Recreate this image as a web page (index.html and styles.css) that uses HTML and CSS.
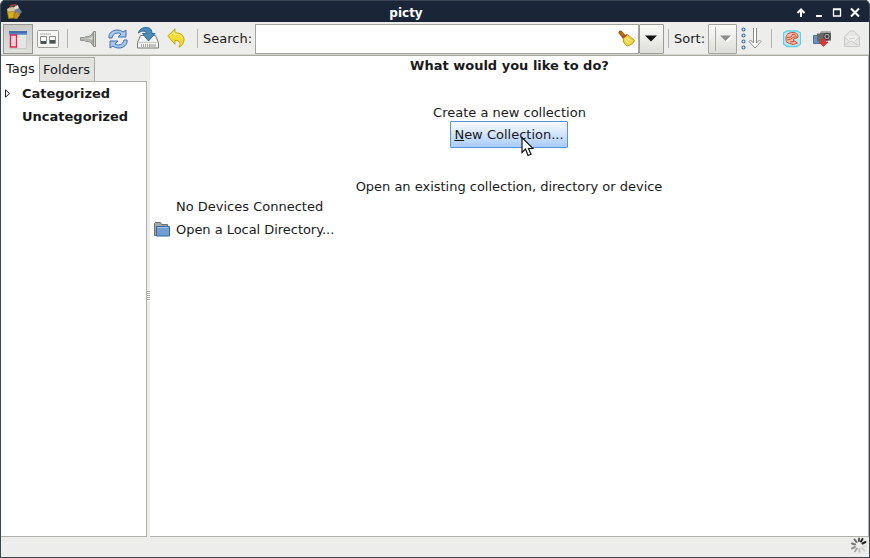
FILE: index.html
```
<!DOCTYPE html>
<html lang="en">
<head>
<meta charset="utf-8">
<title>picty</title>
<link rel="stylesheet" href="styles.css">
</head>
<body>
<div class="window">
  <header class="titlebar">
    <svg class="app-icon" width="16" height="16" viewBox="0 0 16 16"><path d="M4 1l6-1 4 5-5 4-6-2z" fill="#b53b35"/><path d="M1 5l5-3 4 4-3 5-5-1z" fill="#d6c7a0"/><path d="M8 3l4-2 1 4-4 3z" fill="#e1e5df"/><path d="M8 6l5-2 3 4-4 4z" fill="#6d7e98"/><path d="M7 9l5-1 2 3-3 4-5-1z" fill="#bb8d32"/><path d="M1.500 8l7-.5-1 6.500-5 .5z" fill="#d0b41b" stroke="#957820" stroke-width=".7"/><path d="M4 3l5-1" stroke="#413a3b" fill="none"/></svg>
    <h1 class="title">picty</h1>
    <div class="controls">
      <svg width="66" height="14" viewBox="0 0 66 14" fill="none" stroke="#fff" stroke-width="2"><path d="M6 11V5M2.500 7L6 3.500 9.500 7"/><path d="M21 10h6"/><path d="M38.500 3.500h7v6.500h-7zM38 3h8" stroke-width="1.300"/><path d="M56 2.500l8 8m0-8l-8 8"/></svg>
    </div>
  </header>

  <div class="toolbar">
    <div class="tool pressed"><svg width="18" height="18" viewBox="0 0 18 18"><path d="M.5.500h17v17H.500z" fill="#e6e7e3" stroke="#c6cac4"/><path d="M0 0h18v4H0z" fill="#6f9bd0"/><path d="M0 0h18v2.500H0z" fill="#436fae"/><path d="M1.500 4h6v12h-6z" fill="#fad0da" stroke="#dc2450" stroke-width="1.300"/></svg></div>
    <div class="tool browse"><svg width="22" height="18" viewBox="0 0 22 18"><rect x=".5" y=".5" width="21" height="17" rx="1" fill="#f7f7f5" stroke="#9b9e99"/><path d="M3 4h11" stroke="#d1d3cf" stroke-width="2"/><path d="M3.500 6.500h6v7h-6zM12.500 6.500h6v7h-6z" fill="#fff" stroke="#888c87"/><path d="M4 11h5v3H4zM13 10h5v3h-5z" fill="#4d5656"/></svg></div>
    <i class="sep"></i>
    <div class="tool horn"><svg width="17" height="18" viewBox="0 0 17 18"><path d="M.5 7.500h4l1-1H8c2 0 4-2 5-4v13c-1-2-3-4-5-4H5.500l-1-1h-4z" fill="#b4b7b1" stroke="#888b85" stroke-width=".8"/><path d="M6 8.500h3c2 0 3-2 3.500-3v4z" fill="#e2e3df"/><path d="M13.500 1.500h2v15h-2z" fill="#d3d6d0" stroke="#848880" stroke-width=".9"/></svg></div>
    <div class="tool refresh"><svg width="20" height="20" viewBox="0 0 20 20" fill="#a9c6ea" stroke="#3e70b3" stroke-linejoin="round"><path d="M1 9C0 4 5 1 9 1c3 0 5 1 6 2l3-2v7h-8l3-3C10 3 5 4 4 9z"/><path d="M19 11c1 5-4 8-8 8-3 0-5-1-6-2l-3 2v-7h8l-3 3c3 2 8 1 9-4z"/></svg></div>
    <div class="tool save"><svg width="22" height="22" viewBox="0 0 22 22"><path d="M3.500 8.500h15l3 7v5.500H.500v-5.500z" fill="#f3f3f1" stroke="#777a75"/><path d="M1 15.500h20" stroke="#c5c8c3"/><path d="M4 18.500h9" stroke="#aaa" stroke-width="3" stroke-dasharray="1 1"/><path d="M13 18.500h6" stroke="#c3c5c0" stroke-width="3"/><path d="M1.500 6C2 2 6 .500 9 .5c4 0 6 2 6 6h3l-6.500 7.500L5.500 6.500h4C9 4 5 3 1.500 6z" fill="#4c8bb5" stroke="#2e6e99"/></svg></div>
    <div class="tool undo"><svg width="18" height="20" viewBox="0 0 18 20"><path d="M8 .800v4c6 0 9 3 9 7 0 3-2 6-5 7.500 2-4 1-7-4-7v4L.800 8z" fill="#f5dc32" stroke="#c9a50b" stroke-linejoin="round"/><path d="M3 8l4-4v2c4 0 7 1 8 4" fill="none" stroke="#fff394"/></svg></div>
    <i class="sep sep-search"></i>
    <label class="search-label">Search:</label>
    <div class="entry"><svg width="17" height="17" viewBox="0 0 17 17"><path d="M2.500 2.500l3.500 4" stroke="#8f5902" stroke-width="4" stroke-linecap="round"/><path d="M2.500 2.500l3 3" stroke="#b8711b" stroke-width="2" stroke-linecap="round"/><path d="M5 8.500l4.500-4 7 6c-1 3-4 4.500-7 5.500C7 15 5 12 5 8.500z" fill="#efd74a" stroke="#b49512"/><path d="M4.500 8l4.500-3.500" stroke="#c23b22" stroke-width="1.500"/><path d="M7 9l3 4M9.500 8l3 3" stroke="#fff4a0"/></svg></div>
    <div class="drop"><svg width="12" height="7" viewBox="0 0 12 7"><path d="M0 .5h12L6 6.500z" fill="#111"/></svg></div>
    <i class="sep sep-sort"></i>
    <label class="sort-label">Sort:</label>
    <div class="combo"><i></i><svg width="12" height="7" viewBox="0 0 12 7"><path d="M1 1.500h12L7 7z" fill="#fff"/><path d="M0 .5h11L5.500 6z" fill="#8b8e88"/></svg></div>
    <div class="tool order"><svg width="21" height="23" viewBox="0 0 21 23"><g fill="#e9f1fb" stroke="#4470ad" stroke-width="1.200"><circle cx="2.500" cy="2.500" r="1.500"/><circle cx="2.500" cy="8.500" r="1.500"/><circle cx="2.500" cy="14.500" r="1.500"/><circle cx="2.500" cy="20.500" r="1.500"/></g><path d="M12.500 1v15l-3-3-1.500 1.500 6 6.500 6-6.500-1.500-1.500-3 3V1" fill="#fff" stroke="#888b86"/></svg></div>
    <i class="sep sep-end"></i>
    <div class="tool brain"><svg width="18" height="18" viewBox="0 0 18 18"><path d="M4 1h10l3.500 2v11L14 16.500H4L.5 14V3z" fill="#bceaf2" stroke="#5fd0e6" stroke-width="1.300"/><path d="M3 8c0-4 3-5.500 7-5.500 3.500 0 5 1.500 5 4.500-1 2-4 1-5 3l4.500 3-4 1.500-4-1-3-1.500C3 11 3 10 3 8z" fill="#f5bba8" stroke="#c8503a"/><path d="M4 7.500l4-.5 2-3 3 1.500M4 10l4-1 3-2 3 0M7 12l4-.5" fill="none" stroke="#c8503a"/></svg></div>
    <div class="tool camera"><svg width="19" height="18" viewBox="0 0 19 18"><path d="M.5 5.500h8v8h-8z" fill="#6b91c0" stroke="#4c73a6"/><path d="M4 3.500h3l1-2h10v9l-9 1H4z" fill="#666865"/><path d="M8 2h10" stroke="#b7b7b2" stroke-width="1.500"/><circle cx="14" cy="6.500" r="3.200" fill="#aaa" stroke="#333"/><circle cx="14" cy="6.500" r="1.500" fill="#333"/><path d="M8.500 9h4v3h2.500L10.500 16.500 6 12h2.500z" fill="#e03838" stroke="#c22929" stroke-width=".7"/></svg></div>
    <div class="tool mail"><svg width="16" height="17" viewBox="0 0 16 17"><path d="M.5 7L6 1h4l5.500 6v9.500H.500z" fill="#e6e7e4" stroke="#c9cbc6"/><path d="M3 6h10v5H3z" fill="#f1f1ef"/><path d="M1 15l6-4 7 4M1 8l4 3m10-3l-4 3" fill="none" stroke="#cbcdc8"/><path d="M5 9l6-1" stroke="#d0d2cd"/></svg></div>
  </div>

  <main class="main">
    <aside class="sidebar">
      <nav class="tabs"><div class="tab active">Tags</div><div class="tab folders">Folders</div></nav>
      <div class="tree">
        <div class="node"><svg width="6" height="9" viewBox="0 0 6 9"><path d="M.5.800v7.400l4-3.700z" fill="#fff" stroke="#222"/></svg>Categorized</div>
        <div class="node leaf">Uncategorized</div>
      </div>
    </aside>
    <div class="handle"><i></i></div>
    <section class="content">
      <h2>What would you like to do?</h2>
      <p class="create">Create a new collection</p>
      <div class="button-wrap">
        <button class="new"><u>N</u>ew Collection...</button>
        <svg class="cursor" width="13" height="21" viewBox="0 0 13 21"><path d="M1 1.500v15l3.500-3.500 2.500 6.500 3-1.300L7.500 12.500H12z" fill="#fff" stroke="#111" stroke-width="1.200"/></svg>
      </div>
      <p class="open">Open an existing collection, directory or device</p>
      <p class="devices">No Devices Connected</p>
      <p class="local"><svg width="16" height="15" viewBox="0 0 16 15"><path d="M.5 13V1.500l1-1h5l1 2h6v11H.500z" fill="#a5a8a2" stroke="#6d716b"/><path d="M2.500 4.500h13v9.500h-13z" fill="#729fcf" stroke="#3465a4"/><path d="M3.500 5.500h11" stroke="#a6c6e8"/></svg>Open a Local Directory...</p>
    </section>
  </main>
  <footer class="status">
    <svg width="16" height="16" viewBox="0 0 16 16" stroke-width="2" stroke-linecap="round"><g fill="none"><path d="M8 4V1.500" stroke="#555"/><path d="M10 4.500L11.500 2" stroke="#222"/><path d="M11.500 6.500L14.500 5" stroke="#222"/><path d="M12 9l3 .5" stroke="#ddd"/><path d="M11 11l2.500 2.500" stroke="#d1d1cf"/><path d="M8.500 12v3" stroke="#c2c2c0"/><path d="M6 11.500L4 14.500" stroke="#aaa"/><path d="M4 10L1 11.500" stroke="#999"/><path d="M4 7.500L1 6.500" stroke="#777"/><path d="M5.500 5L3.500 2.500" stroke="#666"/></g></svg>
  </footer>
</div>
</body>
</html>
```
FILE: styles.css
```
* { box-sizing: border-box; }
body { margin: 0; background: #fff; font: 13px/16px "DejaVu Sans", sans-serif; color: #1a1a1a; }
h1, h2, p { margin: 0; font-size: inherit; }
svg { display: block; flex: none; }
.window { width: 870px; height: 558px; border: 1px solid #3a4654; border-top: 0; border-radius: 5px 5px 0 0; background: #ededeb; display: flex; flex-direction: column; overflow: hidden; }
.titlebar { height: 22px; flex: none; background: #1a2637; border-top: 1px solid #3a4654; color: #fff; display: flex; align-items: center; padding: 0 6px 0 5px; }
.app-icon { margin-top: 1px; }
.title { flex: 1; text-align: center; font-size: 12px; padding: 3px 5px 0 0; }
.controls { width: 68px; padding-top: 2px; }
.toolbar { height: 34px; flex: none; display: flex; align-items: center; border-bottom: 1px solid #a9a9a2; padding: 2px 0 2px 2px; box-shadow: inset 0 -1px #d5d5d0; }
.tool { flex: none; display: flex; align-items: center; justify-content: center; }
.pressed { width: 30px; height: 30px; border: 1px solid #989892; background: linear-gradient(#c9c9c6, #e0e0dd); }
.pressed svg { margin-top: 2px; }
.browse { margin-left: 4px; padding-top: 1px; }
.sep { width: 1px; height: 19px; flex: none; background: #b5b5af; margin-left: 8px; }
.horn { margin-left: 12px; }
.refresh { margin-left: 11px; }
.save { margin-left: 9px; margin-top: -2px; }
.undo { margin-left: 8px; margin-top: -2px; }
.sep-search { margin-left: 12px; }
.search-label { margin-left: 5px; width: 52px; white-space: nowrap; }
.entry { width: 384px; height: 30px; flex: none; background: #fff; border: 1px solid #a5a5a0; display: flex; align-items: center; justify-content: flex-end; padding-right: 3px; }
.drop, .combo { height: 30px; border: 1px solid #9c9c96; border-radius: 1px; background: linear-gradient(#fafaf9, #deded9); display: flex; align-items: center; flex: none; }
.drop { width: 25px; justify-content: center; }
.drop svg { margin-left: -1px; }
.sep-sort { margin-left: 4px; }
.sort-label { margin-left: 5px; width: 34px; white-space: nowrap; }
.combo { width: 29px; border-color: #a5a59f; }
.combo i { width: 1px; height: 24px; background: #aaaaa3; margin: 0 4px 0 6px; }
.order { margin-left: 4px; }
.sep-end { margin-left: 9px; }
.brain { margin-left: 11px; }
.camera { margin-left: 12px; }
.mail { margin-left: 12px; }
.main { flex: 1; display: flex; min-height: 0; }
.sidebar { width: 146px; display: flex; flex-direction: column; flex: none; }
.tabs { height: 26px; margin-bottom: -1px; display: flex; flex: none; position: relative; }
.tab { flex: none; }
.active { width: 38px; padding: 5px 0 0 5px; background: #fff; }
.folders { width: 56px; height: 25px; margin-top: 1px; border: 1px solid #a9a9a3; background: #e3e3df; padding: 4px 0 0 3px; }
.tree { flex: 1; border: 1px solid #b1b1ab; border-left: 0; background: #fff; font-weight: bold; }
.node { height: 23px; padding-left: 4px; display: flex; align-items: center; gap: 11px; }
.node svg { margin-top: -1px; }
.leaf { padding-left: 21px; }
.handle { width: 3px; flex: none; display: flex; align-items: center; }
.handle i { width: 3px; height: 10px; margin-top: -1px; background: repeating-linear-gradient(#a9a9a3 0 1px, #fff 1px 2px); }
.content { flex: 1; background: #fff; border: solid #b1b1ab; border-width: 0 1px 1px 0; }
.content h2 { text-align: center; padding: 2px 0 0 1px; }
.create { text-align: center; padding: 31px 0 0 1px; }
.button-wrap { position: relative; display: flex; justify-content: center; padding-right: 1px; }
.new { width: 118px; height: 27px; margin: 0; padding: 0 0 0 1px; border: 1px solid #5b93dd; border-radius: 1px; background: linear-gradient(#fafcff, #a8cbf8); font: inherit; color: #1a1a1a; white-space: nowrap; }
.cursor { position: absolute; left: 371px; top: 15px; }
.open { text-align: center; padding-top: 31px; letter-spacing: -.015px; }
.devices { padding: 4px 0 0 26px; }
.local { display: flex; align-items: center; gap: 6px; padding: 7px 0 0 4px; letter-spacing: -.04px; }
.local svg { margin-top: -1px; }
.status { height: 20px; flex: none; display: flex; align-items: center; justify-content: flex-end; padding: 0 2px 5px 0; }
```
